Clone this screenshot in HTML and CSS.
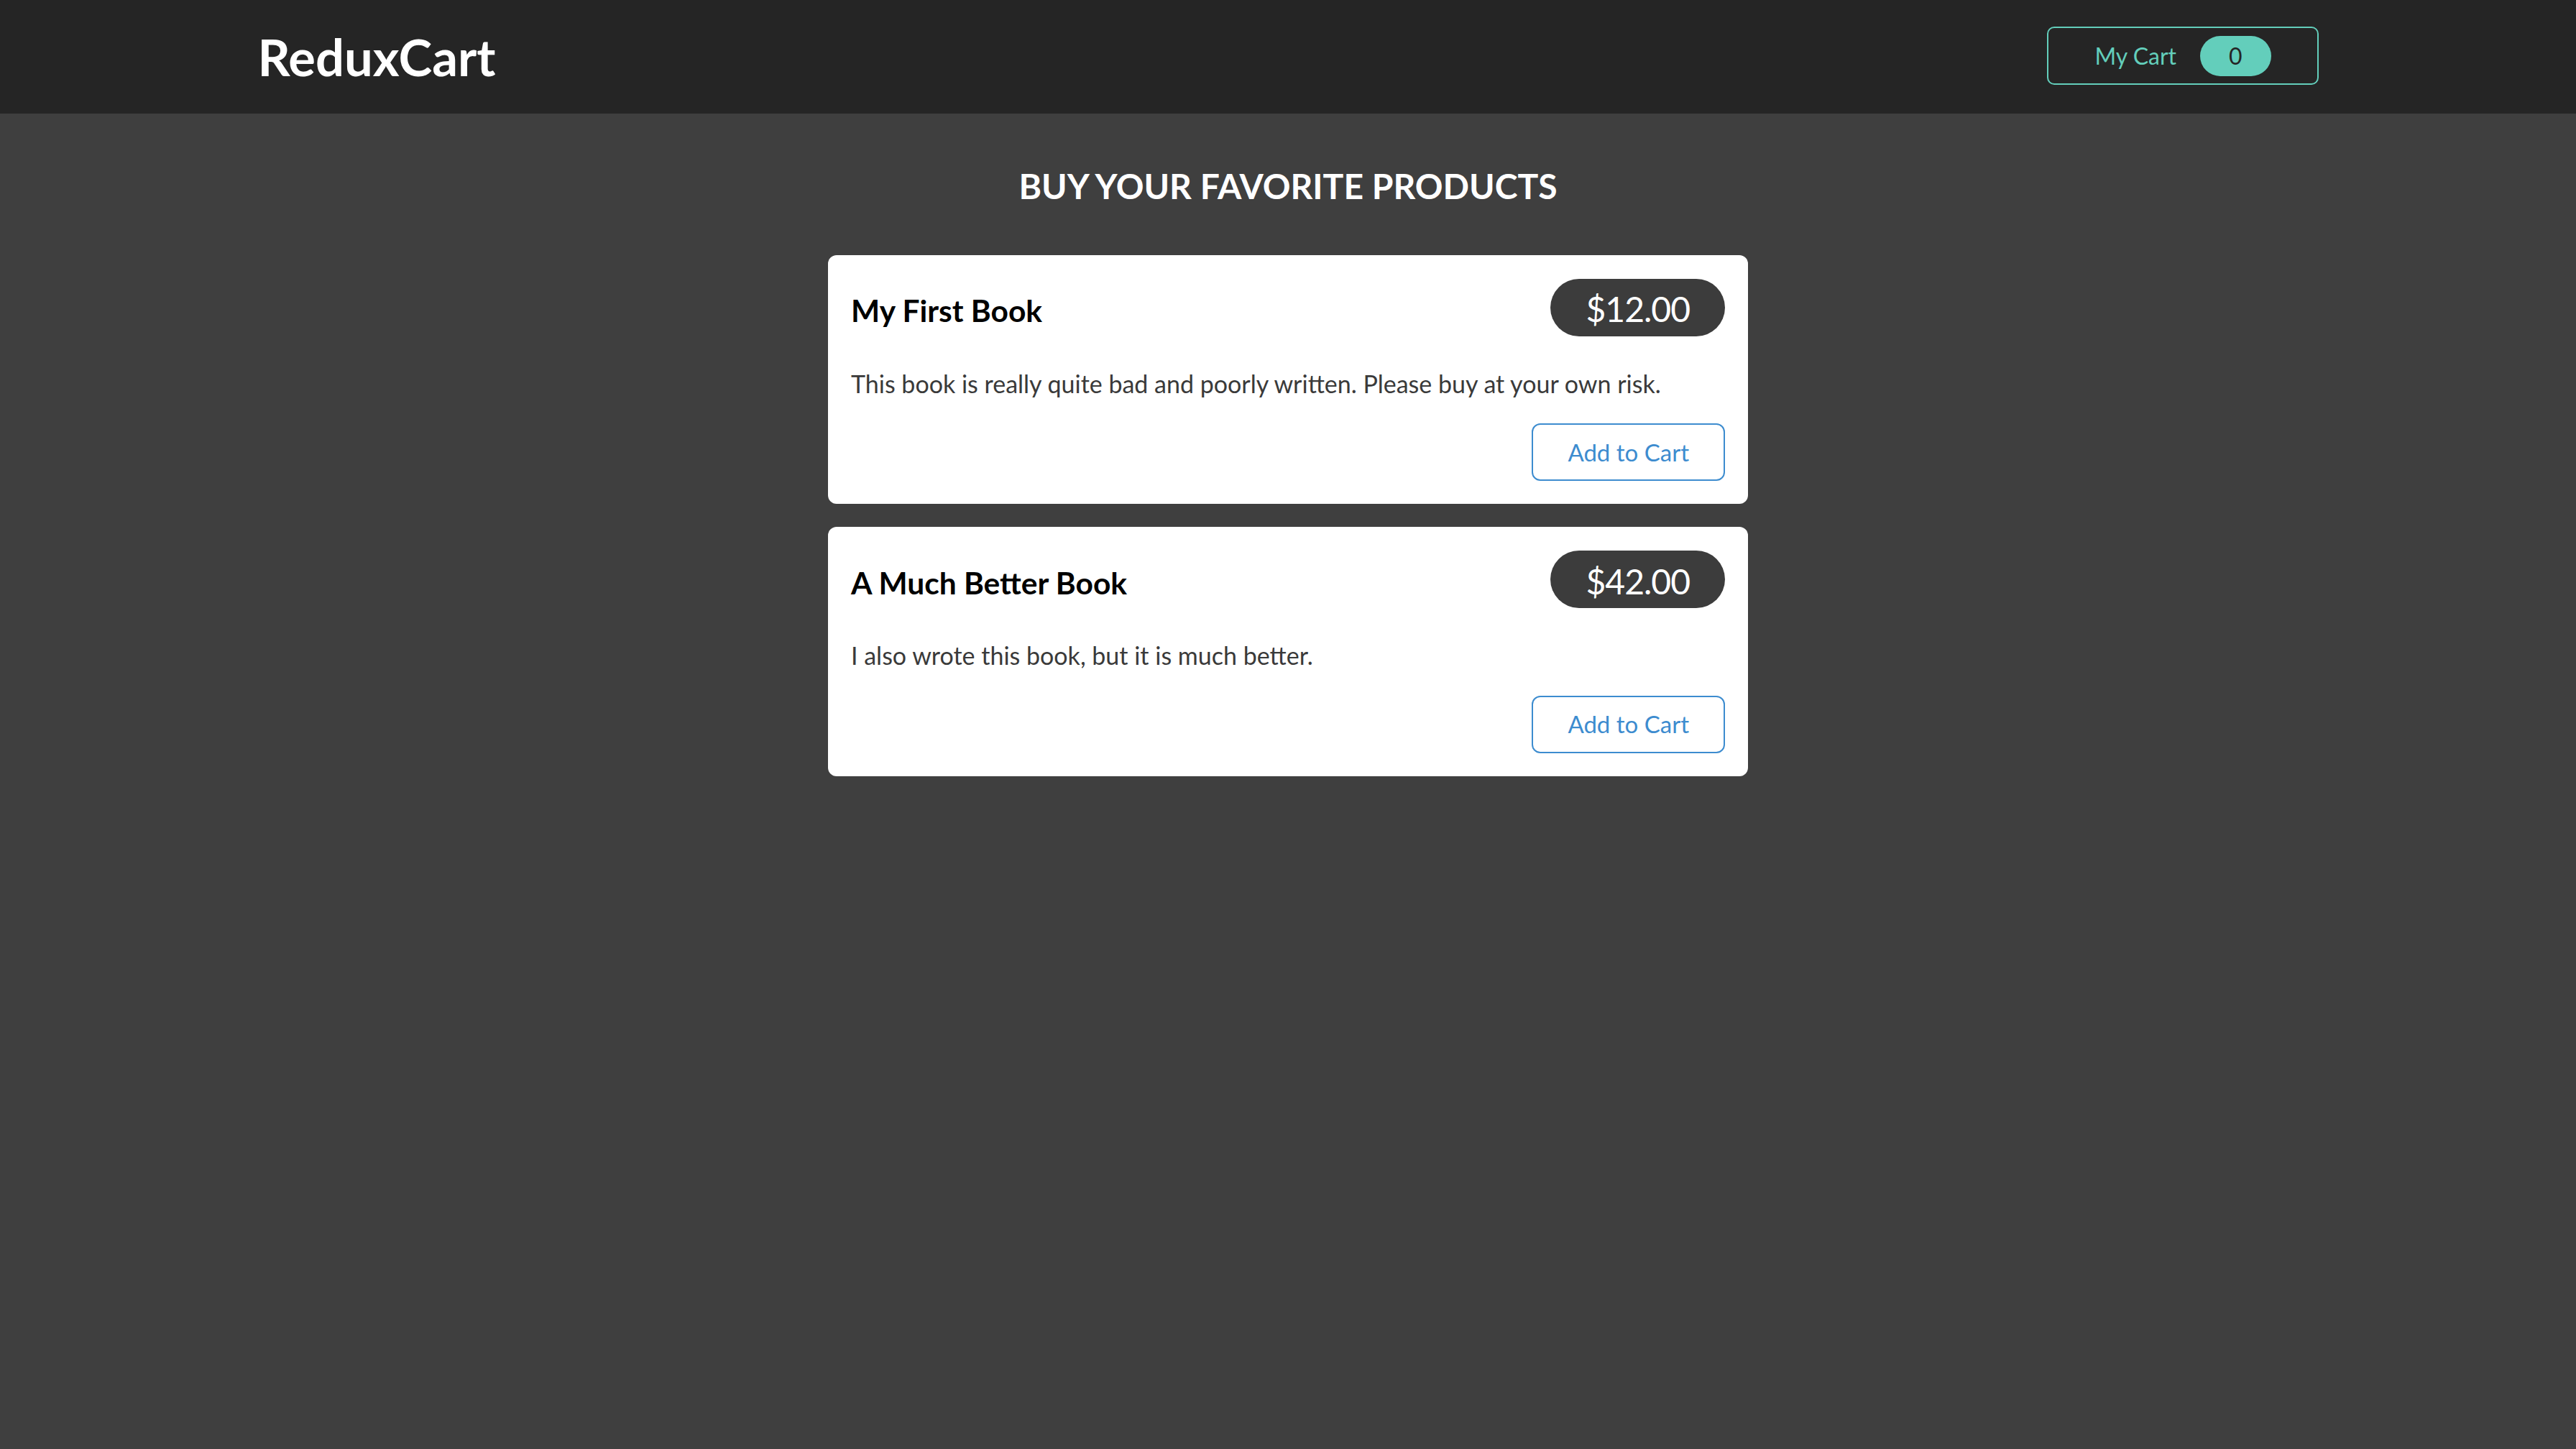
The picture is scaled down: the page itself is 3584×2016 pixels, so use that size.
FILE: index.html
```html
<!DOCTYPE html>
<html lang="en">
<head>
<meta charset="utf-8">
<title>ReduxCart</title>
<link rel="stylesheet" href="styles.css">
</head>
<body>
<header class="header">
  <h1 class="logo">ReduxCart</h1>
  <nav>
    <button class="cart-button">
      <span>My Cart</span>
      <span class="cart-badge">0</span>
    </button>
  </nav>
</header>
<main class="main">
  <section class="products">
    <h2 class="products-title">Buy your favorite products</h2>
    <ul class="product-list">
      <li class="card">
        <div class="card-head">
          <h3 class="card-title">My First Book</h3>
          <div class="price">$12.00</div>
        </div>
        <p class="card-desc">This book is really quite bad and poorly written. Please buy at your own risk.</p>
        <div class="actions">
          <button class="add-button">Add to Cart</button>
        </div>
      </li>
      <li class="card">
        <div class="card-head">
          <h3 class="card-title">A Much Better Book</h3>
          <div class="price">$42.00</div>
        </div>
        <p class="card-desc">I also wrote this book, but it is much better.</p>
        <div class="actions">
          <button class="add-button">Add to Cart</button>
        </div>
      </li>
    </ul>
  </section>
</main>
</body>
</html>
```

FILE: styles.css
```css
* {
  box-sizing: border-box;
}

html, body {
  margin: 0;
  padding: 0;
}

body {
  background: #3f3f3f;
  font-family: Lato, "Open Sans", "Liberation Sans", sans-serif;
  min-height: 2016px;
}

.header {
  height: 158px;
  background: #252525;
  padding: 0 10%;
  display: flex;
  align-items: center;
  justify-content: space-between;
}

.logo {
  margin: 0;
  color: #ffffff;
  font-size: 70.5px;
  font-weight: 700;
  line-height: 1.2;
}

.cart-button {
  display: flex;
  align-items: center;
  height: 81px;
  padding: 0 64px;
  background: transparent;
  border: 2px solid #63cebb;
  border-radius: 10px;
  color: #63cebb;
  font-family: inherit;
  font-size: 32px;
  margin-top: -3px;
}

.cart-badge {
  display: inline-flex;
  align-items: center;
  justify-content: center;
  height: 56px;
  padding: 0 40px;
  margin-left: 33px;
  border-radius: 28px;
  background: #63cebb;
  color: #252525;
}

.main {
  padding-top: 72px;
}

.products-title {
  margin: 0;
  color: #ffffff;
  text-align: center;
  text-transform: uppercase;
  font-size: 48px;
  font-weight: 700;
  line-height: 1.2;
}

.product-list {
  list-style: none;
  margin: 67px auto 0;
  padding: 0;
  width: 1280px;
  display: flex;
  flex-direction: column;
  gap: 32px;
}

.card {
  background: #ffffff;
  border-radius: 12px;
  padding: 32px;
}

.card-head {
  display: flex;
  align-items: baseline;
  justify-content: space-between;
}

.card-title {
  margin: 0;
  color: #000000;
  font-size: 42.5px;
  font-weight: 700;
  line-height: 1.2;
}

.price {
  display: inline-flex;
  align-items: center;
  height: 80px;
  margin-top: 1px;
  padding: 4px 49px 0;
  border-radius: 40px;
  background: #3c3c3c;
  color: #ffffff;
  font-size: 48px;
  letter-spacing: -1px;
  line-height: 1.2;
}

.card-desc {
  margin: 46px 0 0;
  color: #3a3a3a;
  font-size: 34px;
  line-height: 1.2;
}

.actions {
  display: flex;
  justify-content: flex-end;
  margin-top: 35px;
}

.add-button {
  height: 80px;
  padding: 0 48px;
  background: #ffffff;
  border: 2px solid #3d8ccf;
  border-radius: 12px;
  color: #3d8ccf;
  font-family: inherit;
  font-size: 33px;
  line-height: 1.2;
}
```
